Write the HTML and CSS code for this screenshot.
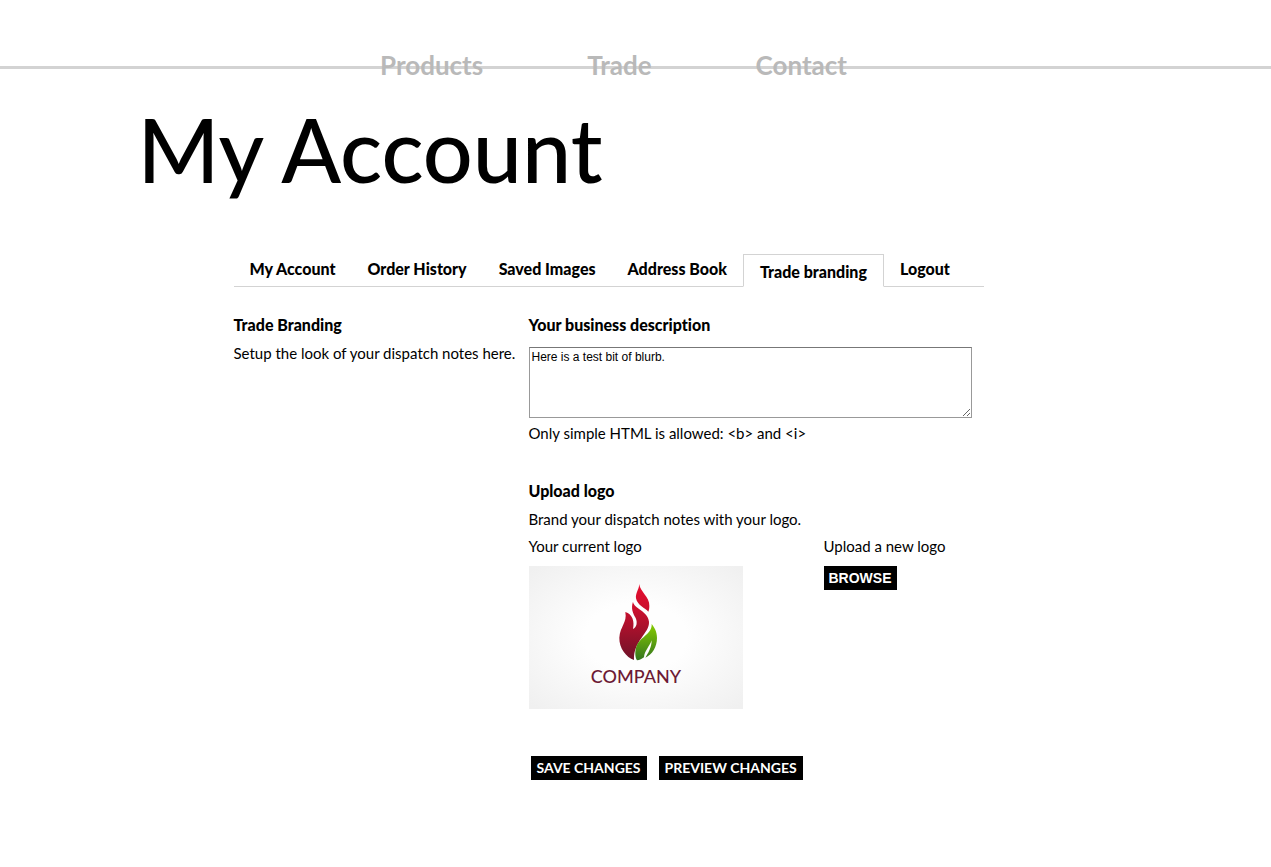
FILE: index.html
```html
<!DOCTYPE html>
<html lang="en">
  <head>
    <meta charset="UTF-8" />
    <meta name="viewport" content="width=device-width, initial-scale=1.0" />
    <title>My Account - Trade branding</title>
    <link rel="stylesheet" href="styles.css">
  </head>
  <body>
    <header>
      <nav class="main-nav">
        <a href="#products">Products</a>
        <a href="#trade">Trade</a>
        <a href="#contact">Contact</a>
      </nav>
    </header>
    <main>
      <h1>My Account</h1>
      <div class="account">
        <nav class="tabs">
          <a href="#account">My Account</a>
          <a href="#orders">Order History</a>
          <a href="#images">Saved Images</a>
          <a href="#addresses">Address Book</a>
          <a href="#branding" class="active">Trade branding</a>
          <a href="#logout">Logout</a>
        </nav>
        <form class="branding">
          <section class="intro">
            <h2>Trade Branding</h2>
            <p>Setup the look of your dispatch notes here.</p>
          </section>
          <div class="fields">
            <section class="description">
              <h2><label for="description">Your business description</label></h2>
              <textarea id="description" name="description">Here is a test bit of blurb.</textarea>
              <p>Only simple HTML is allowed: &lt;b&gt; and &lt;i&gt;</p>
            </section>
            <section>
              <h2>Upload logo</h2>
              <p>Brand your dispatch notes with your logo.</p>
              <div class="logos">
                <div>
                  <p>Your current logo</p>
                  <svg class="logo" viewBox="0 0 214 143" role="img" aria-label="Company logo">
                    <defs>
                      <radialGradient id="paper" cx="50%" cy="50%" r="68%">
                        <stop offset="0.35" stop-color="#fefefe" />
                        <stop offset="1" stop-color="#f0f0f0" />
                      </radialGradient>
                      <linearGradient id="flame" gradientUnits="userSpaceOnUse" x1="0" y1="27" x2="0" y2="255">
                        <stop offset="0" stop-color="#e80c2e" />
                        <stop offset="0.35" stop-color="#c8102e" />
                        <stop offset="1" stop-color="#6d1228" />
                      </linearGradient>
                      <linearGradient id="leaf" x1="0" y1="0" x2="0" y2="1">
                        <stop offset="0" stop-color="#86cc00" />
                        <stop offset="1" stop-color="#34751f" />
                      </linearGradient>
                    </defs>
                    <rect width="214" height="143" fill="url(#paper)" />
                    <g transform="translate(71 9) scale(0.3333)">
                      <path fill="url(#flame)" d="M118 27C119 50 150 65 148 93C148 101 147 106 145 110C136 100 112 91 108 70C106 54 117 44 118 27Z" />
                      <path fill="url(#flame)" d="M99 80C101 100 144 108 147 140C149 175 100 196 102 255C79 247 57 219 58 188C60 154 82 143 76 111C98 118 104 140 99 162C110 158 113 142 107 129C99 114 92 101 99 80Z" />
                      <path fill="url(#leaf)" d="M155 147C157 176 122 185 110 212C104 228 105 246 111 256C119 256 126 251 132 247C133 228 149 214 155 196C155 218 144 235 136 248C157 239 171 215 171 189C171 168 163 158 155 147Z" />
                    </g>
                    <text class="logo-name" x="107" y="117" text-anchor="middle">COMPANY</text>
                  </svg>
                </div>
                <div>
                  <p>Upload a new logo</p>
                  <button type="button" class="browse">BROWSE</button>
                </div>
              </div>
            </section>
            <div class="actions">
              <button type="submit">SAVE CHANGES</button>
              <button type="button">PREVIEW CHANGES</button>
            </div>
          </div>
        </form>
      </div>
    </main>
  </body>
</html>
```
FILE: styles.css
```css
body {
  font-family: Lato, sans-serif;
  font-size: 15px;
  font-variant-ligatures: none;
  line-height: 20px;
  background-color: #fff;
  color: #000;
  margin: 0;
}
header {
  padding-top: 46px;
  background: linear-gradient(#d3d3d3, #d3d3d3) 0 66px / 100% 3px no-repeat;
}
.main-nav {
  display: flex;
  justify-content: center;
  gap: 104px;
  padding-right: 44px;
}
.main-nav a {
  color: #b9b9b9;
  font-size: 26px;
  font-weight: bold;
  line-height: 38px;
  text-decoration: none;
}
main {
  max-width: 1000px;
  margin: 0 auto;
}
h1 {
  margin: 15px 2px 55px;
  font-size: 88px;
  font-weight: 500;
  line-height: 100px;
}
.account {
  max-width: 750px;
  margin-left: 98px;
}
.tabs {
  display: flex;
  align-items: flex-end;
  border-bottom: 1px solid #d3d3d3;
}
.tabs a {
  padding: 0 16px 7px;
  color: #000;
  font-size: 16px;
  font-weight: 900;
  text-decoration: none;
}
.tabs .active {
  margin-bottom: -1px;
  padding: 7px 16px 4px;
  border: 1px solid #d3d3d3;
  border-bottom-color: #fff;
  background-color: #fff;
}
.branding {
  display: grid;
  grid-template-columns: 295px 1fr;
  padding-top: 28px;
}
h2 {
  margin: 0 0 8px;
  font-size: 16px;
  font-weight: 900;
  line-height: 20px;
}
p {
  margin: 0 0 7px;
}
textarea {
  display: block;
  box-sizing: border-box;
  width: 100%;
  max-width: 443px;
  height: 71px;
  margin: 12px 0 5px;
  padding: 2px;
  border: 1px solid #999;
  border-top-color: #777;
  font: 12px/15px "Liberation Sans", Arial, sans-serif;
}
.description {
  margin-bottom: 38px;
}
.logos {
  display: grid;
  grid-template-columns: 295px 1fr;
}
.logos p {
  margin-bottom: 10px;
}
.logo {
  display: block;
  width: 214px;
  height: 143px;
}
.logo-name {
  fill: #6d1a35;
  font-size: 18px;
  font-weight: 500;
}
button {
  height: 24px;
  padding: 0 6px;
  border: 0;
  background-color: #000;
  color: #fff;
  font: bold 14px/22px Lato, sans-serif;
  cursor: pointer;
}
.browse {
  padding: 0 5px;
  font-family: "Liberation Sans", Arial, sans-serif;
}
.actions {
  display: flex;
  gap: 12px;
  margin: 47px 2px;
}
```
